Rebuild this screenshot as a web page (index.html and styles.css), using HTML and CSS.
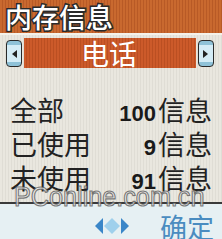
FILE: index.html
```html
<!DOCTYPE html>
<html>
<head>
<meta charset="utf-8">
<link rel="stylesheet" href="styles.css">
</head>
<body>
<div class="screen">
  <div class="header"><span class="title">内存信息</span></div>
  <div class="tabs">
    <div class="arrow-btn"><svg width="8" height="10" viewBox="0 0 8 10"><polygon points="7,1 2,5 7,9" fill="#222"/></svg></div>
    <div class="tab"><span>电话</span></div>
    <div class="arrow-btn"><svg width="8" height="10" viewBox="0 0 8 10"><polygon points="1,1 6,5 1,9" fill="#222"/></svg></div>
  </div>
  <div class="list">
    <div class="row"><span class="label">全部</span><span class="value"><b>100</b>信息</span></div>
    <div class="row"><span class="label">已使用</span><span class="value"><b>9</b>信息</span></div>
    <div class="row"><span class="label">未使用</span><span class="value"><b>91</b>信息</span></div>
  </div>
  <div class="footer">
    <svg class="nav" width="34" height="18" viewBox="0 0 34 18">
      <polygon points="8,1 0,9 8,17" fill="#3a86c8"/>
      <polygon points="17,1 25,9 17,17 9,9" fill="#9fd0ec"/>
      <polygon points="26,1 34,9 26,17" fill="#3a86c8"/>
    </svg>
    <span class="ok">确定</span>
  </div>
  <div class="watermark">PConline.com.cn</div>
</div>
</body>
</html>
```
FILE: styles.css
```css
html, body { margin: 0; padding: 0; }
body { width: 222px; height: 239px; overflow: hidden; background: #e6e4dc; }
.screen {
  position: relative;
  width: 222px; height: 239px; overflow: hidden;
  font-family: "Noto Sans CJK SC", sans-serif;
  background: repeating-linear-gradient(90deg, #e9e7df 0 2px, #dfddd5 2px 3px);
}
.header {
  height: 35px;
  background: repeating-linear-gradient(90deg, #c9692f 0 2px, #b85a26 2px 3px);
  border-bottom: 2px solid #f4f2ea;
  box-sizing: border-box;
  padding-left: 5px;
  display: flex; align-items: center;
}
.title {
  font-size: 27px; line-height: 30px; font-weight: 500;
  color: #fff;
  -webkit-text-stroke: 3px #2a2a2a; paint-order: stroke fill;
  margin-top: 1px;
}
.tabs {
  height: 33px;
  display: flex; align-items: center;
  padding: 0 8px 0 6px;
  gap: 2px;
}
.arrow-btn {
  width: 16px; height: 27px; box-sizing: border-box;
  border: 1px solid #2a2a2a; border-radius: 4px;
  background: linear-gradient(180deg, #8fc2d8 0 4px, #d4ecf6 4px 21px, #8fc2d8 21px);
  display: flex; align-items: center; justify-content: center;
  margin-top: 4px;
}
.tab {
  flex: 1; height: 30px; margin-top: 3px;
  background: repeating-linear-gradient(90deg, #cc5a2a 0 2px, #bb4f22 2px 3px);
  display: flex; align-items: center; justify-content: center;
}
.tab span { color: #fff; font-size: 28px; line-height: 30px; margin-left: -2px; }
.list { padding: 27px 10px 0 10px; height: 134px; box-sizing: border-box; }
.row {
  height: 34px; display: flex; justify-content: space-between; align-items: center;
  font-size: 27px; color: #222; line-height: 30px;
}
.row .label { margin-top: -4px; }
.value b { font-family: "Liberation Sans", sans-serif; font-weight: bold; font-size: 22px; color: #1a1a1a; margin-right: 2px; }
.value { color: #222; }
.footer {
  height: 37px; box-sizing: border-box;
  border-top: 2px solid #3a3a3a;
  background: #e6f0f3;
  display: flex; align-items: center;
  padding-left: 95px;
}
.nav { margin-top: 9px; }
.ok { color: #4a8cc0; font-size: 27px; line-height: 30px; margin-left: 31px; margin-top: 10px; }
.watermark {
  position: absolute; left: 14px; top: 181px;
  font-family: "Liberation Sans", sans-serif; font-size: 28px;
  color: rgba(236,236,236,0.75);
  -webkit-text-stroke: 1.2px rgba(80,80,80,0.75);
  transform: scaleX(0.9); transform-origin: left;
}
```
